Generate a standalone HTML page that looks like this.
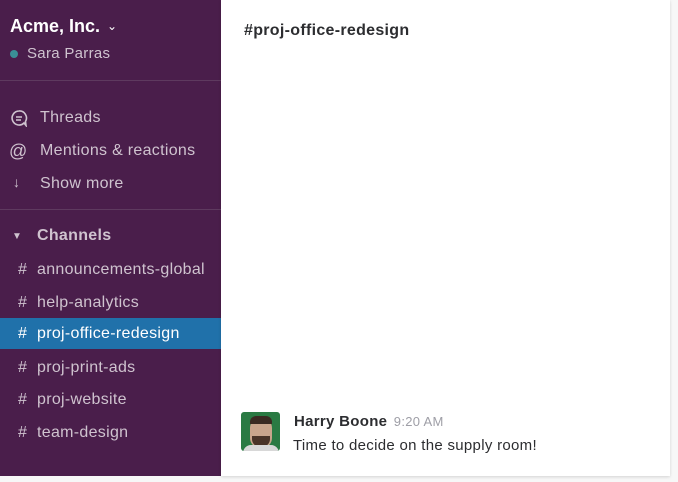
<!DOCTYPE html>
<html><head><style>
body{margin:0;width:678px;height:482px;background:#f7f7f7;font-family:"Liberation Sans",sans-serif;position:relative;overflow:hidden;letter-spacing:0.3px}
.sb{position:absolute;left:0;top:0;width:221px;height:476px;background:#4a1e4b;color:#cfc3cf}
.main{position:absolute;left:221px;top:0;width:449px;height:476px;background:#fff;box-shadow:0 1px 3px rgba(0,0,0,.15)}
.t{position:absolute;white-space:nowrap}
.it{position:absolute;left:0;width:221px;height:27px;font-size:16px;line-height:27px}
.it span{position:absolute;left:37px}
.it i{position:absolute;left:18px;font-style:normal}
</style></head><body>
<div class="sb">
<div class="t" style="left:10px;top:16px;font-size:18px;font-weight:bold;color:#fff;letter-spacing:0">Acme, Inc. <span style="font-size:12px;font-weight:normal;position:relative;top:-2px;left:2px">⌄</span></div>
<div style="position:absolute;left:10px;top:50px;width:8px;height:8px;border-radius:50%;background:#3a8f96"></div>
<div class="t" style="left:27px;top:45px;font-size:15px">Sara Parras</div>
<div style="position:absolute;left:0;top:80px;width:221px;height:1px;background:#5e3a5f"></div>
<svg style="position:absolute;left:10px;top:109px" width="18" height="18" viewBox="0 0 18 18" fill="none" stroke="#cfc3cf" stroke-width="1.6"><path d="M9 2a7 7 0 1 0 5 12l2 2.5-.5-4A7 7 0 0 0 9 2z"/><path d="M6 8h6M6 11h5"/></svg>
<div class="t" style="left:40px;top:109px;font-size:16px">Threads</div>
<div class="t" style="left:9px;top:141px;font-size:18px">@</div>
<div class="t" style="left:40px;top:142px;font-size:16px">Mentions &amp; reactions</div>
<div class="t" style="left:13px;top:174px;font-size:14px">↓</div>
<div class="t" style="left:40px;top:175px;font-size:16px">Show more</div>
<div style="position:absolute;left:0;top:209px;width:221px;height:1px;background:#5e3a5f"></div>
<div class="t" style="left:12px;top:231px;font-size:10px">▼</div>
<div class="t" style="left:37px;top:227px;font-size:16px;font-weight:bold">Channels</div>
<div class="it" style="top:256px"><i>#</i><span>announcements-global</span></div>
<div class="it" style="top:289px"><i>#</i><span>help-analytics</span></div>
<div class="it" style="top:318px;height:31px;line-height:31px;background:#2071aa;color:#fff"><i>#</i><span>proj-office-redesign</span></div>
<div class="it" style="top:354px"><i>#</i><span>proj-print-ads</span></div>
<div class="it" style="top:386px"><i>#</i><span>proj-website</span></div>
<div class="it" style="top:419px"><i>#</i><span>team-design</span></div>
</div>
<div class="main">
<div class="t" style="left:23px;top:22px;font-size:16px;font-weight:bold;color:#2c2d30">#proj-office-redesign</div>
<div style="position:absolute;left:20px;top:412px;width:39px;height:39px;border-radius:3px;background:#2a7a43;overflow:hidden">
<div style="position:absolute;left:9px;top:6px;width:22px;height:30px;border-radius:10px;background:#c9a58c"></div>
<div style="position:absolute;left:9px;top:4px;width:22px;height:8px;border-radius:6px 6px 0 0;background:#3a2a22"></div>
<div style="position:absolute;left:11px;top:24px;width:18px;height:11px;border-radius:0 0 8px 8px;background:#4a3428"></div>
<div style="position:absolute;left:2px;top:33px;width:36px;height:8px;border-radius:8px 8px 0 0;background:#d8d8d8"></div>
</div>
<div class="t" style="left:73px;top:413px;font-size:15px;font-weight:bold;color:#2c2d30">Harry Boone <span style="font-size:13px;font-weight:normal;color:#9e9ea6;margin-left:2px">9:20 AM</span></div>
<div class="t" style="left:72px;top:437px;font-size:15px;color:#2c2d30">Time to decide on the supply room!</div>
</div>
</body></html>
